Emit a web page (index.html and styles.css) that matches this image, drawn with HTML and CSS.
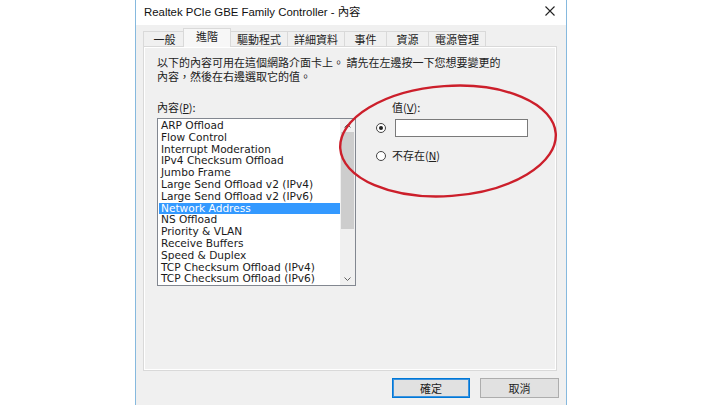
FILE: index.html
```html
<!DOCTYPE html>
<html lang="zh-Hant">
<head>
<meta charset="utf-8">
<link rel="stylesheet" href="styles.css">
</head>
<body>
<div class="window">
  <div class="titlebar">
    <span class="title">Realtek PCIe GBE Family Controller - 內容</span>
    <svg class="close" width="10" height="10" viewBox="0 0 10 10"><path d="M0.5 0.5 L9.5 9.5 M9.5 0.5 L0.5 9.5" stroke="#222" stroke-width="1.1"/></svg>
  </div>
  <div class="body">
    <div class="tabs">
      <div class="tab">一般</div>
      <div class="tab selected">進階</div>
      <div class="tab">驅動程式</div>
      <div class="tab">詳細資料</div>
      <div class="tab">事件</div>
      <div class="tab">資源</div>
      <div class="tab">電源管理</div>
    </div>
    <div class="panel">
      <div class="desc">
        <div class="desc-line">以下的內容可用在這個網路介面卡上。 請先在左邊按一下您想要變更的</div>
        <div class="desc-line">內容，然後在右邊選取它的值。</div>
      </div>
      <div class="columns">
        <div class="left">
          <div class="label">內容(<u>P</u>):</div>
          <div class="listbox">
            <ul class="items">
              <li>ARP Offload</li>
              <li>Flow Control</li>
              <li>Interrupt Moderation</li>
              <li>IPv4 Checksum Offload</li>
              <li>Jumbo Frame</li>
              <li>Large Send Offload v2 (IPv4)</li>
              <li>Large Send Offload v2 (IPv6)</li>
              <li class="sel">Network Address</li>
              <li>NS Offload</li>
              <li>Priority &amp; VLAN</li>
              <li>Receive Buffers</li>
              <li>Speed &amp; Duplex</li>
              <li>TCP Checksum Offload (IPv4)</li>
              <li>TCP Checksum Offload (IPv6)</li>
            </ul>
            <div class="scrollbar">
              <div class="arrow"><svg width="7" height="4" viewBox="0 0 7 4"><polyline points="0.5,3.5 3.5,0.5 6.5,3.5" fill="none" stroke="#606060" stroke-width="1"/></svg></div>
              <div class="track"><div class="thumb"></div></div>
              <div class="arrow"><svg width="7" height="4" viewBox="0 0 7 4"><polyline points="0.5,0.5 3.5,3.5 6.5,0.5" fill="none" stroke="#606060" stroke-width="1"/></svg></div>
            </div>
          </div>
        </div>
        <div class="right">
          <div class="label value-label">值(<u>V</u>):</div>
          <div class="opt opt1">
            <span class="radio checked"></span>
            <span class="input"></span>
          </div>
          <div class="opt opt2">
            <span class="radio"></span>
            <span class="opt-text">不存在(<u>N</u>)</span>
          </div>
        </div>
      </div>
    </div>
    <div class="buttons">
      <div class="btn default">確定</div>
      <div class="btn">取消</div>
    </div>
  </div>
  <svg class="ring" width="240" height="130" viewBox="0 0 240 130">
    <ellipse cx="120" cy="65" rx="108" ry="55" fill="none" stroke="#cc1f2b" stroke-width="2.4" transform="rotate(-4 120 65)"/>
  </svg>
</div>
</body>
</html>
```
FILE: styles.css
```css
html, body {
  margin: 0;
  padding: 0;
  background: #ffffff;
}
body {
  width: 720px;
  height: 405px;
  overflow: hidden;
  font-family: "DejaVu Sans", "Noto Sans CJK TC", sans-serif;
  font-size: 11px;
  color: #000;
}
.window {
  position: relative;
  margin-left: 135px;
  width: 430px;
  height: 405px;
  border-left: 1px solid #86b9de;
  border-right: 1px solid #86b9de;
  background: #f0f0f0;
  display: flex;
  flex-direction: column;
}
.titlebar {
  height: 25px;
  background: #ffffff;
  display: flex;
  align-items: center;
  justify-content: space-between;
  padding: 0 10px 4px 8px;
  box-sizing: border-box;
}
.title {
  font-family: "Liberation Sans", "Noto Sans CJK TC", sans-serif;
  font-size: 11.4px;
  color: #111;
}
.close {
  margin-right: 1px;
}
.body {
  padding: 3px 0 0 7px;
}
.tabs {
  display: flex;
  align-items: flex-end;
  height: 18px;
  position: relative;
  z-index: 1;
  font-family: "Noto Sans CJK TC", sans-serif;
}
.tab {
  height: 15px;
  min-width: 43px;
  padding: 0 6px;
  border: 1px solid #d9d9d9;
  border-bottom: none;
  margin-right: -1px;
  background: #f0f0f0;
  box-sizing: border-box;
  display: flex;
  align-items: center;
  justify-content: center;
  line-height: 13px;
  color: #222;
}
.tab.selected {
  height: 19px;
  margin: 0 -2px -1px -2px;
  padding: 0 8px 3px 8px;
  min-width: 48px;
  background: #f7f7f7;
  position: relative;
  z-index: 2;
}
.tab.selected + .tab {
  margin-left: 1px;
}
.panel {
  width: 414px;
  height: 325px;
  box-sizing: border-box;
  border: 1px solid #d9d9d9;
  box-shadow: inset 1px 1px 0 #ffffff, inset -1px -1px 0 #ffffff;
  background: #f0f0f0;
  padding: 8px 13px 0 13px;
}
.desc {
  font-family: "Noto Sans CJK TC", sans-serif;
  font-size: 11px;
  color: #222;
}
.desc-line {
  height: 14px;
  line-height: 14px;
  white-space: nowrap;
}
.columns {
  display: grid;
  grid-template-columns: 199px 1fr;
  column-gap: 20px;
  margin-top: 18px;
}
.label {
  line-height: 13px;
  height: 13px;
  font-family: "Noto Sans CJK TC", sans-serif;
  color: #222;
}
.label u, .opt-text u {
  font-family: "DejaVu Sans", sans-serif;
  font-size: 10px;
}
.listbox {
  margin-top: 4px;
  height: 168px;
  box-sizing: border-box;
  border: 1px solid #828790;
  background: #ffffff;
  display: flex;
}
.items {
  list-style: none;
  margin: 0;
  padding: 1px 0 0 1px;
  flex: 1;
  overflow: hidden;
}
.items li {
  height: 11.8px;
  line-height: 11.8px;
  padding-left: 2px;
  white-space: nowrap;
  font-size: 10.6px;
  color: #1a1a1a;
}
.items li.sel {
  background: #3399ff;
  color: #ffffff;
}
.scrollbar {
  width: 15px;
  background: #f0f0f0;
  display: flex;
  flex-direction: column;
}
.arrow {
  height: 13px;
  display: flex;
  align-items: center;
  justify-content: center;
}
.track {
  flex: 1;
  padding: 0 1px;
}
.thumb {
  height: 97px;
  background: #cdcdcd;
}
.value-label {
  padding-left: 16px;
}
.opt {
  display: flex;
  align-items: center;
}
.opt1 {
  margin-top: 5px;
  height: 18px;
  gap: 9px;
}
.opt2 {
  margin-top: 12px;
  height: 13px;
  gap: 6px;
}
.radio {
  width: 10px;
  height: 10px;
  box-sizing: border-box;
  border: 1px solid #444;
  border-radius: 50%;
  background: #fff;
  display: flex;
  align-items: center;
  justify-content: center;
}
.radio.checked::after {
  content: "";
  width: 4px;
  height: 4px;
  border-radius: 50%;
  background: #222;
}
.input {
  width: 133px;
  height: 18px;
  box-sizing: border-box;
  border: 1px solid #7a7a7a;
  background: #fff;
}
.opt-text {
  font-family: "Noto Sans CJK TC", sans-serif;
  line-height: 13px;
  color: #222;
}
.buttons {
  display: flex;
  justify-content: flex-end;
  gap: 10px;
  margin-top: 7px;
  padding-right: 7px;
}
.btn {
  height: 20px;
  width: 79px;
  box-sizing: border-box;
  border: 1px solid #adadad;
  background: #e1e1e1;
  display: flex;
  align-items: center;
  justify-content: center;
  font-family: "Noto Sans CJK TC", sans-serif;
  color: #222;
}
.btn.default {
  width: 78px;
  border: 1px solid #0078d7;
  box-shadow: inset 0 0 0 1px #3c93de;
}
.ring {
  position: absolute;
  left: 192px;
  top: 76px;
  z-index: 5;
  pointer-events: none;
}
```
